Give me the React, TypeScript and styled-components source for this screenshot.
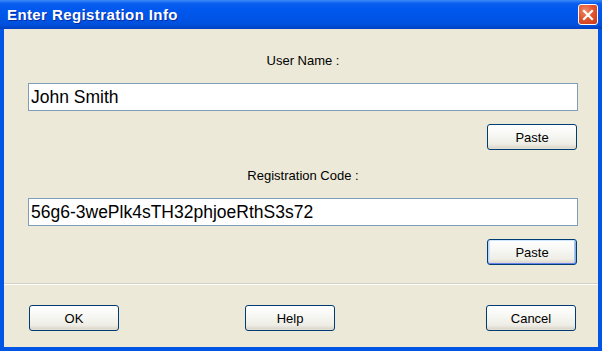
import React from 'react';
import styled, { createGlobalStyle } from 'styled-components';

const GlobalStyle = createGlobalStyle`
  html, body {
    margin: 0;
    padding: 0;
    background: #ffffff;
  }
  * {
    box-sizing: border-box;
  }
`;

const Window = styled.div`
  width: 602px;
  height: 351px;
  display: flex;
  flex-direction: column;
  background: #0055e5;
  font-family: 'Liberation Sans', Arial, sans-serif;
  overflow: hidden;
`;

const TitleBar = styled.div`
  height: 29px;
  flex-shrink: 0;
  display: flex;
  align-items: center;
  justify-content: space-between;
  padding: 0 4px 1px 7px;
  background: linear-gradient(
    180deg,
    #3d8bf7 0%,
    #0a5ff0 12%,
    #0058ee 30%,
    #0055e8 60%,
    #0050dc 85%,
    #0040c0 100%
  );
`;

const Title = styled.span`
  color: #ffffff;
  font-weight: bold;
  font-size: 15px;
  letter-spacing: 0.4px;
  text-shadow: 1px 1px 0 #0b2aa0;
`;

const CloseButton = styled.div`
  width: 20px;
  height: 21px;
  margin-top: 1px;
  border: 1px solid #ffffff;
  border-radius: 3px;
  background: radial-gradient(circle at 35% 30%, #f08a6a 0%, #e3562f 45%, #c7371a 100%);
  display: flex;
  align-items: center;
  justify-content: center;
`;

const Client = styled.div`
  flex: 1;
  margin: 0 4px 4px 4px;
  background: #ece9d8;
  display: flex;
  flex-direction: column;
`;

const Form = styled.div`
  display: flex;
  flex-direction: column;
  padding: 25px 20px 0 24px;
`;

const Label = styled.div<{ $gap: number }>`
  margin-top: ${(p) => p.$gap}px;
  height: 14px;
  line-height: 14px;
  font-size: 13px;
  color: #000000;
  text-align: center;
`;

const TextField = styled.div`
  margin-top: 15px;
  height: 28px;
  border: 1px solid #7f9db9;
  background: #ffffff;
  padding: 0 0 0 2px;
  display: flex;
  align-items: center;
  font-size: 17.5px;
  color: #000000;
  white-space: nowrap;
`;

const Button = styled.div<{ $default?: boolean }>`
  width: 90px;
  height: 26px;
  border: 1px solid #003c74;
  border-radius: 3px;
  background: linear-gradient(180deg, #ffffff 0%, #f7f7f4 40%, #eeede5 80%, #d6d0c5 100%);
  box-shadow: ${(p) =>
    p.$default
      ? 'inset 0 1px 0 #cee7ff, inset 0 -1px 0 #6982ee, inset 1px 0 0 #bcd4f6, inset -1px 0 0 #89ade4, inset 2px 0 0 #cee7ff, inset -2px 0 0 #a9c6f0'
      : 'inset 0 -1px 0 #e3dfd3'};
  display: flex;
  align-items: center;
  justify-content: center;
  font-size: 13px;
  color: #000000;
`;

const PasteRow = styled.div`
  margin-top: 13px;
  display: flex;
  justify-content: flex-end;
  padding-right: 1px;
`;

const Separator = styled.div`
  margin-top: 18px;
  height: 2px;
  border-top: 1px solid #d4d0c2;
  border-bottom: 1px solid #ffffff;
`;

const ButtonBar = styled.div`
  margin-top: 20px;
  display: flex;
  padding-left: 25px;
`;

const BarButton = styled(Button)<{ $offset: number }>`
  margin-left: ${(p) => p.$offset}px;
`;

const CloseIcon = () => (
  <svg width="12" height="12" viewBox="0 0 12 12">
    <path d="M2 2 L10 10 M10 2 L2 10" stroke="#ffffff" strokeWidth="2.2" strokeLinecap="square" />
  </svg>
);

export default function App() {
  return (
    <>
      <GlobalStyle />
      <Window>
        <TitleBar>
          <Title>Enter Registration Info</Title>
          <CloseButton>
            <CloseIcon />
          </CloseButton>
        </TitleBar>
        <Client>
          <Form>
            <Label $gap={0}>User Name :</Label>
            <TextField>John Smith</TextField>
            <PasteRow>
              <Button>Paste</Button>
            </PasteRow>
            <Label $gap={19}>Registration Code :</Label>
            <TextField>56g6-3wePlk4sTH32phjoeRthS3s72</TextField>
            <PasteRow>
              <Button $default>Paste</Button>
            </PasteRow>
          </Form>
          <Separator />
          <ButtonBar>
            <BarButton $offset={0}>OK</BarButton>
            <BarButton $offset={126}>Help</BarButton>
            <BarButton $offset={151}>Cancel</BarButton>
          </ButtonBar>
        </Client>
      </Window>
    </>
  );
}
